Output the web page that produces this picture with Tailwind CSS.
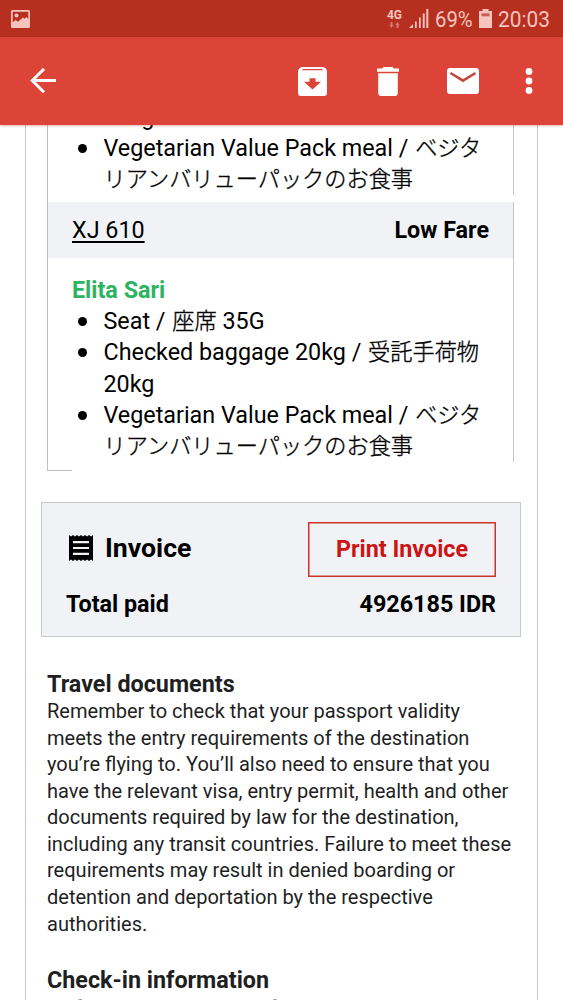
<!DOCTYPE html>
<html lang="en">
<head>
<meta charset="utf-8">
<meta name="viewport" content="width=device-width, initial-scale=1">
<title>Booking details</title>
<script src="https://cdn.jsdelivr.net/npm/@tailwindcss/browser@4"></script>
</head>
<body class="flex h-[1000px] w-[563px] flex-col overflow-hidden bg-white font-['Roboto','Noto_Sans_CJK_JP',sans-serif] text-black">
  <!-- Status bar -->
  <div class="flex h-[37px] shrink-0 items-center bg-[#b7301f] pl-[11px] pr-[12px] text-[#f6c4bf]">
    <svg class="h-[18px] w-[19px]" viewBox="0 0 19 18" fill="currentColor"><path fill-rule="evenodd" d="M1.500 0h16A1.500 1.500 0 0 1 19 1.500v15a1.500 1.500 0 0 1-1.500 1.500h-16A1.500 1.500 0 0 1 0 16.500v-15A1.500 1.500 0 0 1 1.500 0zM1.700 1.700V12.500L4.500 10l2.500 1.800L12 7.500l1.500 1.300L15.500 7l1.800 2V1.700z"/><circle cx="5.500" cy="5.500" r="2"/></svg>
    <div class="ml-auto flex items-center">
      <div class="flex w-[17px] flex-col items-center">
        <span class="text-[12px] font-bold leading-[11px]">4G</span>
        <svg class="mt-[1px] h-[6px] w-[11px] opacity-50" viewBox="0 0 11 6" fill="currentColor"><path d="M1.500 0h2v3h1.200L2.500 6 .300 3h1.200zM7.500 6h2V3h1.200L8.500 0 6.300 3h1.200z"/></svg>
      </div>
      <svg class="ml-[6px] h-[19px] w-[20px]" viewBox="0 0 20 19" fill="currentColor"><path d="M0 19l4-4V19zM6 12.500h1.700V19H6zM10 8.500h1.700V19H10zM13.800 4.500h1.900V19h-1.900zM17.300 0h2V19h-2z"/></svg>
      <span class="ml-[6px] w-[38px] origin-left scale-x-[.89] whitespace-nowrap text-[22.800px] leading-[37px]"><span class="relative top-px">69%</span></span>
      <svg class="ml-[6px] h-[19px] w-[13px]" viewBox="0 0 13 19" fill="currentColor"><path d="M3.500 0h6v2H13v17H0V2h3.500z"/><path d="M2.500 4.300h8v3h-8z" fill="#b7301f" opacity=".7"/></svg>
      <span class="ml-[6px] w-[53px] origin-left scale-x-[.915] whitespace-nowrap text-[22.800px] leading-[37px]"><span class="relative top-px">20:03</span></span>
    </div>
  </div>
  <!-- Toolbar -->
  <div class="z-10 flex h-[88px] shrink-0 items-center bg-[#db4437] pl-[30px] pr-[30px] text-white shadow-[0_1px_2px_rgba(219,68,55,0.4)]">
    <svg class="h-[26px] w-[26px]" viewBox="0 0 26 26" fill="none" stroke="currentColor" stroke-width="3"><path d="M26 12.500H3M14 1L2.300 12.500 14 24.200"/></svg>
    <svg class="ml-auto h-[29px] w-[29px]" viewBox="0 0 29 29"><path fill="currentColor" d="M4 0h21q4 1 4 5v21a3 3 0 0 1-3 3H3a3 3 0 0 1-3-3V5Q0 1 4 0z"/><path fill="#db4437" d="M5 2h19l1 1.300H4zM11.500 11.300h6v3.500h5.500L14.500 22.500 6 14.800h5.500z"/></svg>
    <svg class="ml-[50px] h-[29px] w-[22px]" viewBox="0 0 22 29" fill="currentColor"><path d="M6.500 0h9L17 1.600h5v3.200H0V1.600h5zM1.200 6.300h19.600V26a3 3 0 0 1-3 3H4.200a3 3 0 0 1-3-3z"/></svg>
    <svg class="ml-[48px] h-[26px] w-[32px]" viewBox="0 0 32 26"><rect width="32" height="26" rx="3" fill="currentColor"/><path d="M3.500 5L16 12.700 28.500 5" fill="none" stroke="#c2483e" stroke-width="2.600"/></svg>
    <svg class="ml-[46px] h-[28px] w-[8px]" viewBox="0 0 8 28" fill="currentColor"><circle cx="4" cy="4.500" r="3.400"/><circle cx="4" cy="14" r="3.400"/><circle cx="4" cy="23.500" r="3.400"/></svg>
  </div>
  <!-- Message -->
  <main class="ml-[25px] h-[875px] w-[513px] overflow-hidden border-x-[1.500px] border-[#c4c6c6]">
    <section class="ml-[21px] w-[467px] border-l border-[#bfc1c1] text-[23.330px] leading-[31.100px]">
      <div class="h-[70px] overflow-hidden border-r border-[#c6c8c8]">
        <ul class="-mt-[23.500px] list-none pl-[55.500px]">
          <li>20kg</li>
          <li class="flex"><i class="-ml-[26px] mr-[17px] mt-[11px] h-[9px] w-[9px] shrink-0 rounded-full bg-black"></i><span class="whitespace-nowrap">Vegetarian Value Pack meal / <span class="ml-px text-[22.200px] font-light [-webkit-text-stroke:0.35px]">ベジタ<br>リアンバリューパックのお食事</span></span></li>
        </ul>
      </div>
      <div class="mt-[7px] flex h-[56px] items-center justify-between border-r border-[#c6c8c8] bg-[#f1f2f5] pl-6 pr-6 pt-[2px]">
        <span class="underline decoration-[1.500px] underline-offset-[3px]">XJ 610</span>
        <b>Low Fare</b>
      </div>
      <div class="h-[204px] border-r border-[#c6c8c8] pl-6 pt-[17px]">
        <b class="block text-[#2cb45f]">Elita Sari</b>
        <ul class="pl-[31.500px] pt-[0.300px] [&>li]:flex [&>li]:whitespace-nowrap">
          <li><i class="-ml-[26px] mr-[17px] mt-[11px] h-[9px] w-[9px] shrink-0 rounded-full bg-black"></i><span>Seat / <span class="ml-px text-[22.200px] font-light [-webkit-text-stroke:0.35px]">座席</span> 35G</span></li>
          <li><i class="-ml-[26px] mr-[17px] mt-[11px] h-[9px] w-[9px] shrink-0 rounded-full bg-black"></i><span>Checked baggage 20kg / <span class="ml-px text-[22.200px] font-light [-webkit-text-stroke:0.35px]">受託手荷物</span><br>20kg</span></li>
          <li><i class="-ml-[26px] mr-[17px] mt-[11px] h-[9px] w-[9px] shrink-0 rounded-full bg-black"></i><span>Vegetarian Value Pack meal / <span class="ml-px text-[22.200px] font-light [-webkit-text-stroke:0.35px]">ベジタ<br>リアンバリューパックのお食事</span></span></li>
        </ul>
      </div>
      <div class="h-[9px] w-6 border-b border-[#bfc1c1]"></div>
    </section>
    <section class="ml-[15px] mt-[31px] h-[135px] w-[480px] border-[1.500px] border-[#c6c9ca] bg-[#f1f2f5] pl-6 pr-6 pt-[19px] font-bold">
      <div class="flex items-center">
        <svg class="ml-[3px] -mt-[3px] h-[26px] w-[24px]" viewBox="0 0 24 26"><path d="M0 0l2 1.500L4 0l2 1.500L8 0l2 1.500L12 0l2 1.500L16 0l2 1.500L20 0l2 1.500L24 0v26l-2-1.500L20 26l-2-1.500L16 26l-2-1.500L12 26l-2-1.500L8 26l-2-1.500L4 26l-2-1.500L0 26z"/><path d="M4 7.200h16M4 13h16M4 18.800h16" stroke="#f1f2f5" stroke-width="2.200"/></svg>
        <h2 class="ml-3 -mt-[3px] text-[26.660px] leading-8">Invoice</h2>
        <a class="ml-auto flex h-[55px] w-[188px] items-center justify-center border-[1.500px] border-[#c9352c] text-[23.330px] text-[#cc1414] shadow-[inset_0_0_0_0.500px_#c9352c]">Print Invoice</a>
      </div>
      <div class="mt-[12px] flex justify-between text-[23.330px] leading-[31px]"><span>Total paid</span><span>4926185 IDR</span></div>
    </section>
    <section class="ml-[21px] mt-[31px] whitespace-nowrap text-[20.040px] leading-[26.560px] text-[#1f1f1f]">
      <h3 class="pt-[2px] text-[23.330px] font-bold leading-[28px]">Travel documents</h3>
      <p>Remember to check that your passport validity<br>meets the entry requirements of the destination<br>you’re flying to. You’ll also need to ensure that you<br>have the relevant visa, entry permit, health and other<br>documents required by law for the destination,<br>including any transit countries. Failure to meet these<br>requirements may result in denied boarding or<br>detention and deportation by the respective<br>authorities.</p>
      <h3 class="mt-[28px] pt-[1px] text-[23.330px] font-bold leading-[29px]">Check-in information</h3>
      <p>Self check-in is available for</p>
    </section>
  </main>
</body>
</html>
